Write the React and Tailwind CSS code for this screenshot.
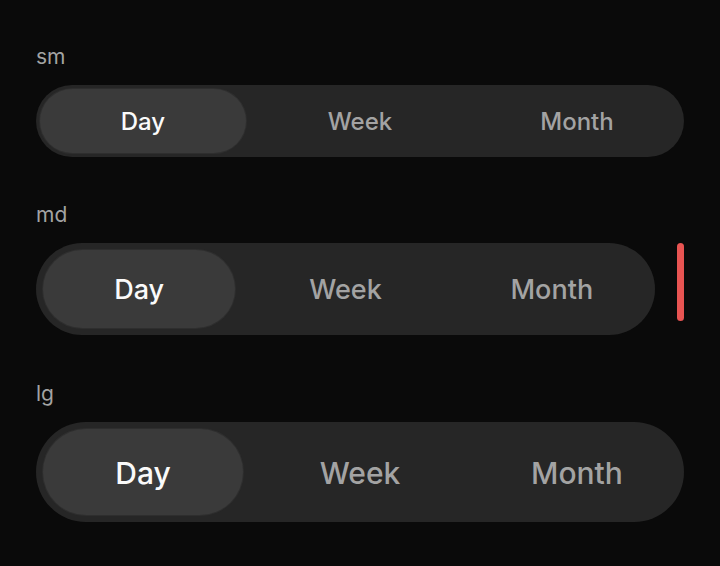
import React, { useState } from 'react';

const options = ['Day', 'Week', 'Month'];

const sizes = {
  sm: {
    track: 'h-[72px] p-[4px] gap-[11px]',
    text: 'text-[24px]',
  },
  md: {
    track: 'h-[92px] p-[7px] gap-[14px]',
    text: 'text-[27px]',
  },
  lg: {
    track: 'h-[100px] p-[7px] gap-[17px]',
    text: 'text-[30px]',
  },
};

const Segmented = ({ size }) => {
  const [active, setActive] = useState('Day');
  const s = sizes[size];

  return (
    <div className={`flex-1 grid grid-cols-3 rounded-full bg-[#262626] ${s.track}`}>
      {options.map((opt) => (
        <button
          key={opt}
          onClick={() => setActive(opt)}
          className={`rounded-full font-medium pt-[2px] ${s.text} ${
            active === opt
              ? 'bg-[#3a3a3a] text-[#fafafa] shadow-[0_0_0_1px_#2e2e2e]'
              : 'text-[#a3a3a3]'
          }`}
        >
          {opt}
        </button>
      ))}
    </div>
  );
};

const App = () => {
  return (
    <div
      className="min-h-[566px] bg-[#0a0a0a] px-[36px] pt-[43px] flex flex-col gap-[44px]"
      style={{ fontFamily: 'Inter, "Noto Sans", sans-serif' }}
    >
      <div className="flex flex-col gap-[14px]">
        <div className="text-[21px] leading-[28px] text-[#a3a3a3]">sm</div>
        <div className="flex">
          <Segmented size="sm" />
        </div>
      </div>

      <div className="flex flex-col gap-[14px]">
        <div className="text-[21px] leading-[28px] text-[#a3a3a3]">md</div>
        <div className="flex items-start gap-[22px]">
          <Segmented size="md" />
          <div className="w-[7px] h-[78px] rounded-full bg-[#e85452]" />
        </div>
      </div>

      <div className="flex flex-col gap-[14px] mt-[1px]">
        <div className="text-[21px] leading-[28px] text-[#a3a3a3]">lg</div>
        <div className="flex">
          <Segmented size="lg" />
        </div>
      </div>
    </div>
  );
};

export default App;
